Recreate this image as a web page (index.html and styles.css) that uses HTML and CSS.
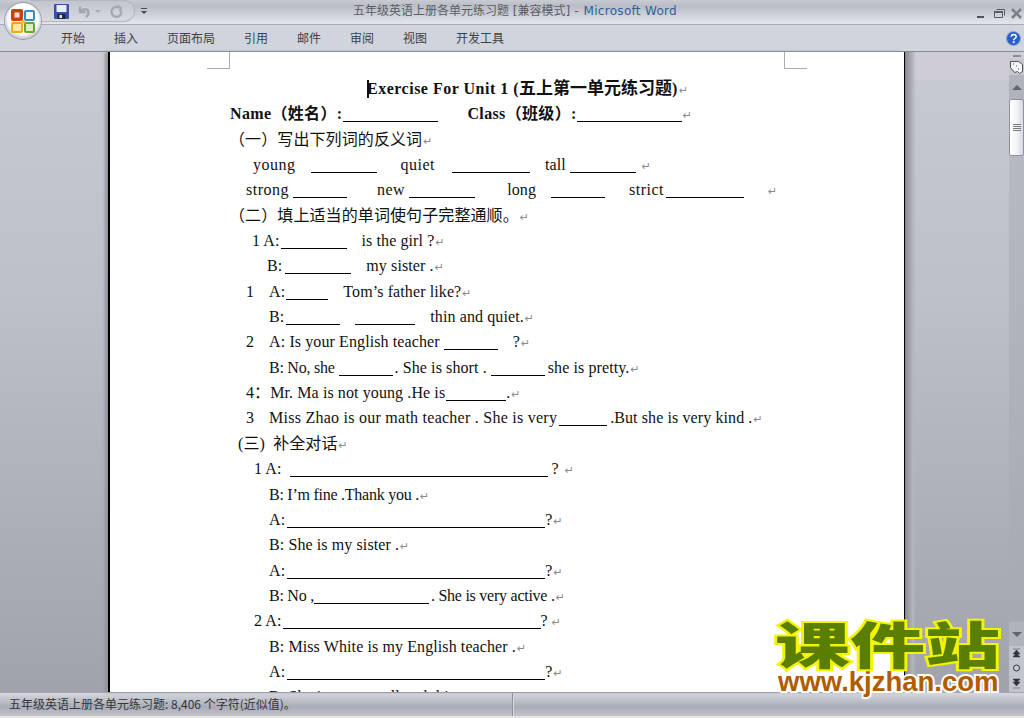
FILE: index.html
```html
<!DOCTYPE html>
<html lang="zh-CN">
<head>
    <meta charset="UTF-8">
    <title>五年级英语上册各单元练习题 - Microsoft Word</title>
    <link rel="stylesheet" href="styles.css">
</head>
<body>
<div class="app">
    <header class="titlebar">
        <div class="qat">
            <svg class="qat-icon" width="15" height="15" viewBox="0 0 15 15"><rect x="0" y="0" width="15" height="15" rx="1" fill="#3a4fa8"/><rect x="2.500" y="1" width="10" height="7" fill="#e8ecf6"/><rect x="3.500" y="10" width="8" height="5" fill="#20283c"/><rect x="5.500" y="11" width="2.500" height="3" fill="#e8ecf6"/></svg>
            <svg class="qat-undo" width="13" height="13" viewBox="0 0 13 13"><path d="M2 1.500v5.500h5.500M2.500 6.500C5 3 10.500 3.500 10.500 7.500c0 2-1 3.500-2.500 4.500" fill="none" stroke="#a4a7b0" stroke-width="2.400"/></svg>
            <span class="qat-arrow"></span>
            <svg class="qat-redo" width="13" height="13" viewBox="0 0 13 13"><path d="M9 2.500A5 5 0 1 0 11.500 7M7 1l3.500 1.500v4.500" fill="none" stroke="#a4a7b0" stroke-width="2.300"/></svg>
            <svg class="qat-more" width="7" height="7" viewBox="0 0 7 7"><path d="M0 0h6v1H0zM0 3h6L3 6z" fill="#4a4d55"/></svg>
        </div>
        <div class="doc-title">五年级英语上册各单元练习题 [兼容模式]<span class="title-sep">-</span><span class="app-name">Microsoft Word</span></div>
        <div class="winbtns">
            <svg width="60" height="14" viewBox="0 0 60 14"><path d="M13 9h7v2h-7z" fill="#50535c"/><path d="M30.500 4.500h8v6h-8z" fill="none" stroke="#5a5d66"/><path d="M32.500 2.500h8v6" fill="none" stroke="#5a5d66"/><path d="M30 4h9v2h-9z" fill="#5a5d66"/><path d="M48 2l9 9M57 2l-9 9" stroke="#7b7e87" stroke-width="2.500"/></svg>
        </div>
    </header>

    <nav class="ribbon">
        <span>开始</span><span>插入</span><span>页面布局</span><span>引用</span><span>邮件</span><span>审阅</span><span>视图</span><span>开发工具</span>
        <svg class="help" width="15" height="15" viewBox="0 0 15 15"><circle cx="7.500" cy="7.500" r="7" fill="#2a5fc8" stroke="#8fa6d8"/><path d="M5.200 5.800c0-3 5-3 5 0 0 1.700-2.500 1.700-2.500 3.400" fill="none" stroke="#fff" stroke-width="1.500"/><rect x="6.800" y="10.300" width="1.800" height="1.800" fill="#fff"/></svg>
    </nav>

    <main class="workspace">
        <div class="gutter"></div>
        <article class="page">
            <p class="ln in-258"><strong class="tt"><i class="caret"></i>Exercise For Unit 1 (<span class="tt-zh">五上第一单元练习题</span>)</strong><i class="rt">↵</i></p>
            <p class="ln in-120"><strong class="nm">Name（姓名）:</strong><span class="b b95 s1"></span><strong class="nm s28">Class（班级）:</strong><span class="b b105"></span><i class="rt">↵</i></p>
            <p class="ln in-119 zh">（一）写出下列词的反义词<i class="rt">↵</i></p>
            <p class="ln in-143"><span class="wide">young</span><span class="b b66 s15"></span><span class="wide s24">quiet</span><span class="b b78 s17"></span><span class="s15">tall</span><span class="b b66 s4"></span><i class="rt s6">↵</i></p>
            <p class="ln in-136"><span class="wide">strong</span><span class="b b54 s4"></span><span class="wide s30">new</span><span class="b b66 s4"></span><span class="s32">long</span><span class="b b54 s15"></span><span class="wide s24">strict</span><span class="b b78 s2"></span><i class="rt s24">↵</i></p>
            <p class="ln in-119 zh">（二）填上适当的单词使句子完整通顺。<i class="rt">↵</i></p>
            <p class="ln in-142"><span>1 A:</span><span class="b b66 s1"></span><span class="s15">is the girl ?</span><i class="rt">↵</i></p>
            <p class="ln in-157"><span>B:</span><span class="b b66 s3"></span><span class="s15">my sister .</span><i class="rt">↵</i></p>
            <p class="ln in-136"><span>1</span><span class="s15">A:</span><span class="b b42 s1"></span><span class="s15">Tom’s father like?</span><i class="rt">↵</i></p>
            <p class="ln in-159"><span>B:</span><span class="b b54 s2"></span><span class="b b60 s15"></span><span class="s15">thin and quiet.</span><i class="rt">↵</i></p>
            <p class="ln in-136"><span>2</span><span class="s15">A: Is your English teacher</span><span class="b b54 s4"></span><span class="s15">?</span><i class="rt">↵</i></p>
            <p class="ln in-159"><span class="tight">B: No, she</span><span class="b b54 s4"></span><span class="s2">. She is short .</span><span class="b b54 s4"></span><span class="s3">she is pretty.</span><i class="rt">↵</i></p>
            <p class="ln in-136"><span>4：Mr. Ma is not young .He is</span><span class="b b60 s1"></span><span>.</span><i class="rt">↵</i></p>
            <p class="ln in-136"><span>3</span><span class="snug s15">Miss Zhao is our math teacher . She is very</span><span class="b b48 s2"></span><span class="s3">.But she is very kind .</span><i class="rt">↵</i></p>
            <p class="ln in-128 zh">(三)  补全对话<i class="rt">↵</i></p>
            <p class="ln in-144"><span>1 A:</span><span class="b b258 s8"></span><span class="s4">?</span><i class="rt s6">↵</i></p>
            <p class="ln in-159 tight">B: I’m fine .Thank you .<i class="rt">↵</i></p>
            <p class="ln in-159"><span>A:</span><span class="b b258 s2"></span><span>?</span><i class="rt">↵</i></p>
            <p class="ln in-159">B: She is my sister .<i class="rt">↵</i></p>
            <p class="ln in-159"><span>A:</span><span class="b b258 s2"></span><span>?</span><i class="rt">↵</i></p>
            <p class="ln in-159"><span class="tight">B: No ,</span><span class="b b115"></span><span class="tight s2">. She is very active .</span><i class="rt">↵</i></p>
            <p class="ln in-144"><span>2 A:</span><span class="b b258 s1"></span><span>?</span><i class="rt s4">↵</i></p>
            <p class="ln in-159">B: Miss White is my English teacher .<i class="rt">↵</i></p>
            <p class="ln in-159"><span>A:</span><span class="b b258 s2"></span><span>?</span><i class="rt">↵</i></p>
            <p class="ln in-159">B: She is very small and thin .<i class="rt">↵</i></p>
            <span class="crop crop-l"></span>
            <span class="crop crop-r"></span>
        </article>
        <div class="page-shadow"></div>
        <div class="gutter gutter-r"></div>
        <aside class="scroll">
            <div class="split"><span></span></div>
            <div class="view-btn">
                <svg width="13" height="14" viewBox="0 0 13 14"><path d="M.500 1.500h8l4 3v7l-3 2-2-2-3 1-4-5z" fill="#f4f4f6" stroke="#50535c"/><path d="M3 4h1M6 6h1M8 9h1" stroke="#50535c"/></svg>
            </div>
            <div class="sb-btn"><span class="tri-up"></span></div>
            <div class="thumb"><span class="grip"></span></div>
            <div class="track"></div>
            <div class="sb-btn"><span class="tri-down"></span></div>
            <div class="browse">
                <svg width="9" height="46" viewBox="0 0 9 46"><path d="M1 3h7M4.500 4L1 8h7zM4.500 7L1 11h7z" fill="#30333a" stroke="#30333a" stroke-width=".5"/><circle cx="4.500" cy="22" r="3" fill="#c8cad0" stroke="#30333a"/><path d="M1 33h7L4.500 37zM1 36h7L4.500 40zM1 42h7" fill="#30333a" stroke="#30333a" stroke-width=".5"/></svg>
            </div>
        </aside>
    </main>

    <footer class="statusbar">
        <div class="status-left">五年级英语上册各单元练习题: 8,406 个字符(近似值)。</div>
        <div class="status-right"></div>
    </footer>
</div>

<div class="office-btn">
    <svg width="26" height="26" viewBox="0 0 26 26">
        <rect x="1" y="1" width="12" height="12" rx="2" fill="#c8400c"/><rect x="4.500" y="4.500" width="5" height="5" fill="#f6e2c8"/>
        <rect x="15" y="3" width="9" height="9" rx="1" fill="#f2f6fa" stroke="#2e8fd0" stroke-width="2"/>
        <rect x="2" y="15" width="10" height="9" rx="1" fill="#fbe8a8" stroke="#f0a818" stroke-width="2"/>
        <rect x="15" y="15" width="9" height="9" rx="1" fill="#dcecc0" stroke="#68a830" stroke-width="2"/>
        <circle cx="13.500" cy="13.500" r="2" fill="#e8b860"/>
    </svg>
</div>

<div class="watermark">
    <div class="wm-cn">课件站</div>
    <div class="wm-url">www.kjzhan.com</div>
</div>
</body>
</html>
```
FILE: styles.css
```css
html, body {
    margin: 0;
    padding: 0;
    height: 100%;
    overflow: hidden;
}
body {
    font-family: "Noto Sans CJK SC", sans-serif;
    position: relative;
    background: #e6e4dc;
}
.app {
    height: 716px;
    display: flex;
    flex-direction: column;
}

/* title bar */
.titlebar {
    height: 24px;
    flex: none;
    display: flex;
    align-items: center;
    position: relative;
    background: linear-gradient(#c9cbd3 0, #b9bcc6 6px, #c5c8d1 11px, #dfe2e9 22px, #e3e5eb 24px);
    border-bottom: 1px solid #a7abb5;
}
.qat {
    position: absolute;
    left: 30px;
    top: 0;
    width: 105px;
    height: 22px;
    padding-left: 24px;
    box-sizing: border-box;
    display: flex;
    align-items: center;
    border: 1px solid #b4b7c0;
    border-left: 0;
    border-radius: 0 12px 12px 0;
    background: linear-gradient(#c2c5ce, #d8dae1);
}
.qat-undo { margin-left: 9px; }
.qat-arrow {
    width: 0;
    height: 0;
    margin-left: 4px;
    border: 3px solid transparent;
    border-top-color: #a8abb4;
    border-bottom: 0;
}
.qat-redo { margin-left: 9px; }
.qat-more {
    position: absolute;
    left: 111px;
    top: 7px;
}
.doc-title {
    position: absolute;
    left: 353px;
    top: 3px;
    font-size: 12px;
    line-height: 17px;
    color: #5a5c62;
    white-space: nowrap;
    font-family: "DejaVu Sans", "Noto Sans CJK SC", sans-serif;
}
.title-sep { margin: 0 5px 0 4px; }
.app-name {
    color: #2f5f98;
    letter-spacing: .3px;
}
.winbtns {
    position: absolute;
    right: 0;
    top: 2px;
}

/* tabs */
.ribbon {
    height: 27px;
    box-sizing: border-box;
    flex: none;
    display: flex;
    align-items: center;
    gap: 29px;
    padding: 0 0 1px 61px;
    font-size: 12px;
    color: #3e4048;
    background: #d0d4dd;
    border-bottom: 1px solid #878c95;
    position: relative;
}
.help {
    position: absolute;
    right: 3px;
    top: 6px;
}

/* document area */
.workspace {
    flex: 1;
    min-height: 0;
    display: flex;
    background: linear-gradient(#cfccd6 0, #cfccd6 28px, #c6c9d2 28px, #bdbfc9 250px, #a0a3ab 640px);
}
.gutter {
    width: 108px;
    flex: none;
}
.gutter-r { width: 93px; }
.page {
    width: 796px;
    flex: none;
    box-sizing: border-box;
    background: #fff;
    border-left: 2px solid #000;
    box-shadow: -3px 0 3px #8f9299;
    padding-top: 24px;
    position: relative;
    overflow: hidden;
    font-family: "Liberation Serif", "Noto Sans CJK SC", serif;
    font-size: 16px;
    letter-spacing: .1px;
    color: #111;
}
.page-shadow {
    width: 12px;
    flex: none;
    border-left: 1px solid #000;
    box-sizing: border-box;
    background: linear-gradient(90deg, #85888f, #b3b6bd 70%, transparent);
}
.ln {
    margin: 0;
    height: 25.35px;
    line-height: 25.35px;
    display: flex;
    white-space: pre;
    align-items: baseline;
}
.ln strong { font-weight: bold; }
.tt { letter-spacing: .5px; }
.tt-zh {
    font-size: 17px;
    letter-spacing: 0;
}
.nm { letter-spacing: .35px; }
.wide { letter-spacing: .5px; }
.snug { letter-spacing: .25px; }
.tight { letter-spacing: -.25px; }
.zh { font-size: 16px; }
.in-119 { padding-left: 119px; }
.in-120 { padding-left: 120px; }
.in-128 { padding-left: 128px; }
.in-136 { padding-left: 136px; }
.in-142 { padding-left: 142px; }
.in-143 { padding-left: 143px; }
.in-144 { padding-left: 144px; }
.in-157 { padding-left: 157px; }
.in-159 { padding-left: 159px; }
.in-258 { padding-left: 257px; }
.rt {
    font: normal 11px "DejaVu Sans", sans-serif;
    color: #8a8a8a;
    margin-left: 1px;
}
.s1 { margin-left: 1px; }
.s2 { margin-left: 2px; }
.s3 { margin-left: 3px; }
.s4 { margin-left: 4px; }
.s6 { margin-left: 6px; }
.s8 { margin-left: 8px; }
.s15 { margin-left: 15px; }
.s17 { margin-left: 17px; }
.s24 { margin-left: 24px; }
.s28 { margin-left: 29px; }
.s30 { margin-left: 30px; }
.s32 { margin-left: 32px; }
.b {
    display: inline-block;
    height: 0;
    border-bottom: 1px solid #000;
    align-self: baseline;
    position: relative;
    top: 3px;
}
.b42 { width: 42px; }
.b48 { width: 48px; }
.b54 { width: 54px; }
.b60 { width: 60px; }
.b66 { width: 66px; }
.b78 { width: 78px; }
.b95 { width: 95px; }
.b105 { width: 105px; }
.b115 { width: 115px; }
.b258 { width: 258px; }
.caret {
    display: inline-block;
    width: 2px;
    height: 18px;
    margin-right: -2px;
    background: #111;
    vertical-align: -4px;
}
.crop {
    position: absolute;
    top: 0;
    width: 22px;
    height: 16px;
    border-bottom: 1px solid #a9acb4;
}
.crop-l {
    left: 97px;
    border-right: 1px solid #a9acb4;
}
.crop-r {
    left: 674px;
    border-left: 1px solid #a9acb4;
}

/* scrollbar */
.scroll {
    width: 15px;
    flex: none;
    display: flex;
    flex-direction: column;
}
.split {
    height: 7px;
    display: flex;
    align-items: center;
    justify-content: center;
}
.split span {
    width: 8px;
    height: 2px;
    background: #8a8d95;
}
.view-btn {
    height: 16px;
    display: flex;
    justify-content: center;
    align-items: center;
    background: #c3c6cf;
}
.sb-btn {
    height: 24px;
    flex: none;
    display: flex;
    align-items: center;
    justify-content: center;
    background: #b0b3bc;
}
.tri-up, .tri-down {
    width: 0;
    height: 0;
    border: 5px solid transparent;
}
.tri-up {
    border-top: 0;
    border-bottom-color: #62656d;
}
.tri-down {
    border-bottom: 0;
    border-top-color: #62656d;
}
.thumb {
    height: 57px;
    flex: none;
    box-sizing: border-box;
    border: 1px solid #8e9199;
    border-radius: 2px;
    background: linear-gradient(90deg, #fff, #f4f4f8 50%, #d6d6e2);
    display: flex;
    align-items: center;
    justify-content: center;
}
.grip {
    width: 8px;
    height: 7px;
    background: repeating-linear-gradient(#777a82 0, #777a82 1px, transparent 1px, transparent 2px);
}
.track {
    flex: 1;
    background: linear-gradient(#b6b9c2, #a6a9b2);
}
.browse {
    height: 46px;
    flex: none;
    display: flex;
    justify-content: center;
    background: #c2c4cb;
}

/* status bar */
.statusbar {
    height: 23px;
    flex: none;
    display: flex;
    border-top: 1px solid #a2a5ad;
    background: linear-gradient(#d6d8de 0, #b2b5bf 11px, #a9acb7 14px, #c2c5cd 23px);
    font-size: 12px;
    line-height: 22px;
    color: #33353a;
}
.status-left {
    width: 503px;
    padding-left: 9px;
    border-right: 1px solid #8f929a;
    box-shadow: 1px 0 0 #d8dae0;
}
.status-right { flex: 1; }

/* round office button sits over the title bar */
.office-btn {
    position: absolute;
    left: 5px;
    top: 3px;
    width: 36px;
    height: 36px;
    border-radius: 50%;
    display: flex;
    align-items: center;
    justify-content: center;
    background: radial-gradient(circle at 50% 45%, #fff 55%, #c6c8cf 72%, #8d9099 100%);
    box-shadow: 0 0 0 1px #9a9da6;
}

/* site stamp */
.watermark {
    position: absolute;
    left: 775px;
    top: 614px;
    width: 230px;
}
.wm-cn {
    width: 150px;
    font: 900 50px/56px "Noto Sans CJK SC", sans-serif;
    color: #5a7f00;
    -webkit-text-stroke: 4px #f4f400;
    paint-order: stroke fill;
    transform: scaleX(1.5);
    transform-origin: 0 0;
    white-space: nowrap;
}
.wm-url {
    font: bold 27.5px/24px "Liberation Sans", sans-serif;
    color: #b05c00;
    -webkit-text-stroke: 4px #fff;
    paint-order: stroke fill;
    white-space: nowrap;
    margin: 0 0 0 3px;
}
```
